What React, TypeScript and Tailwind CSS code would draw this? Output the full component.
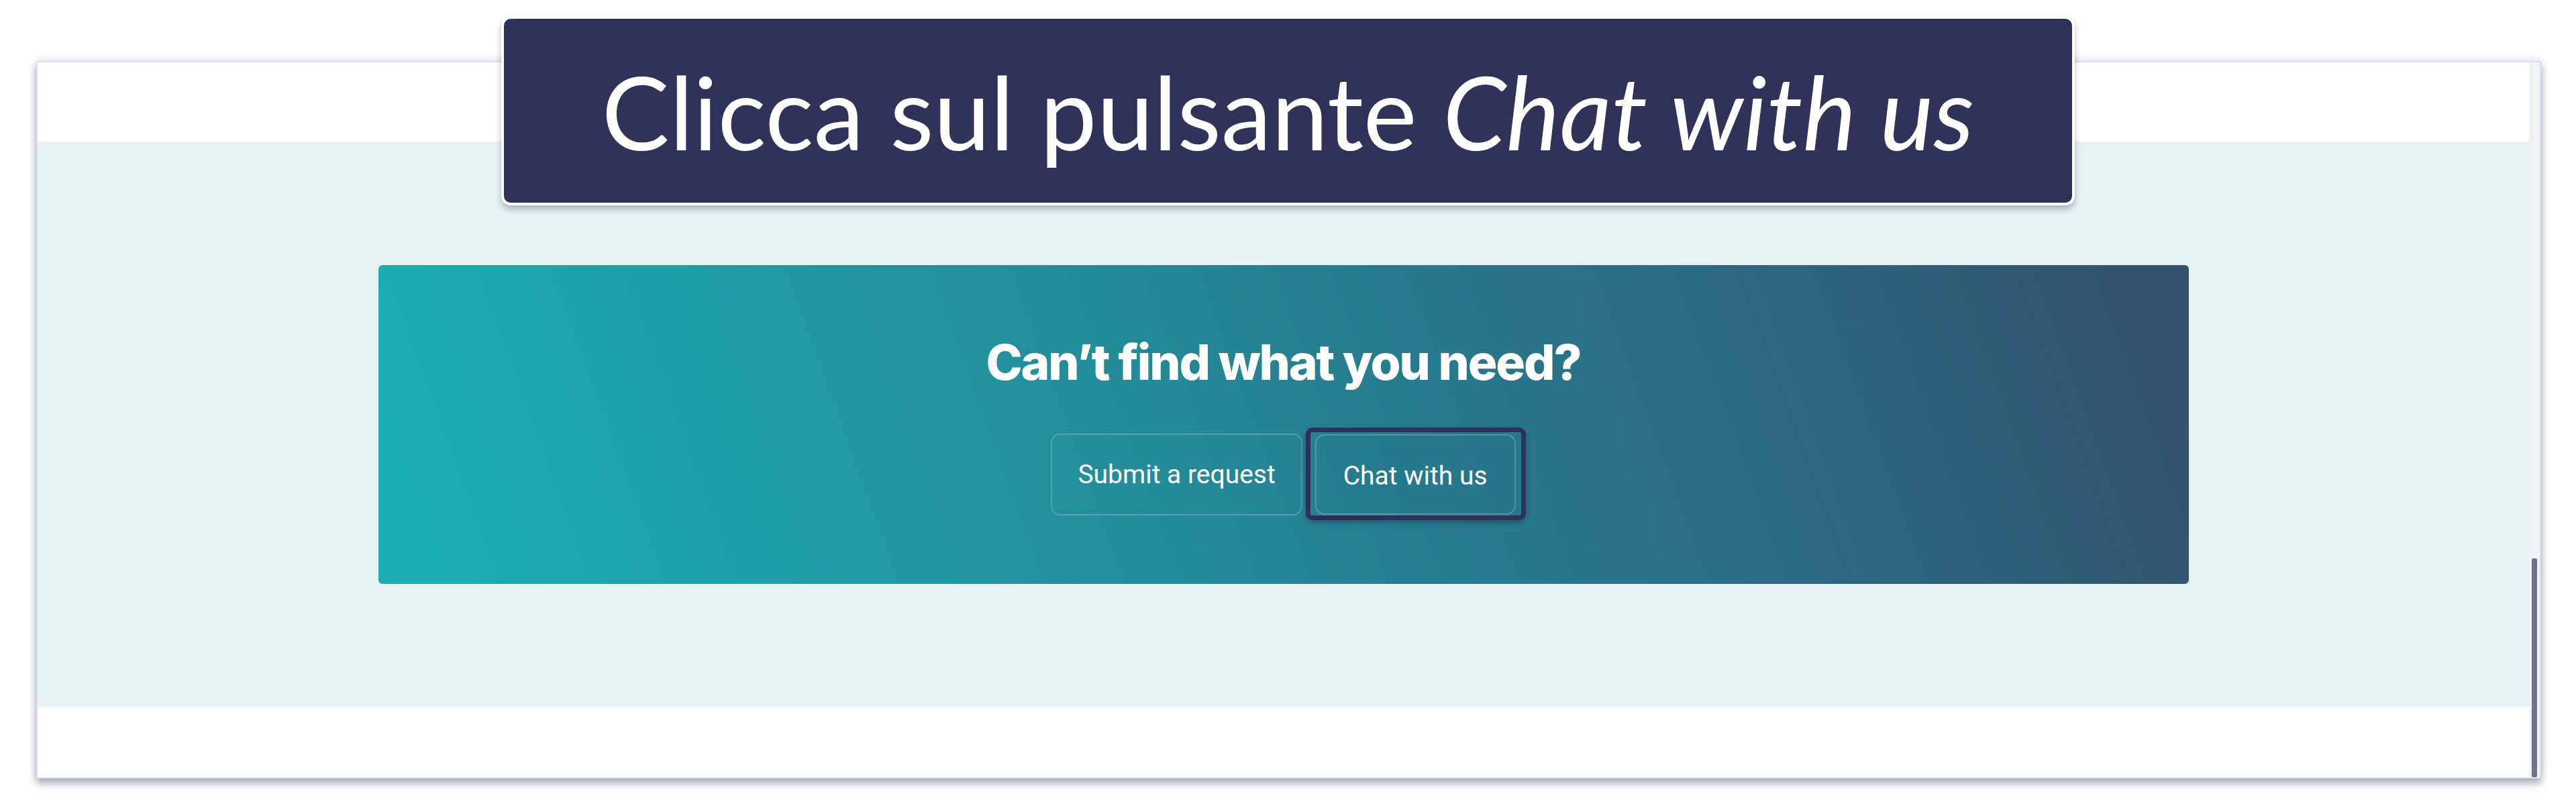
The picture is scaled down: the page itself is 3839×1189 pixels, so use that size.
import React from 'react';

/**
 * Help-centre footer screenshot: "Can't find what you need?" card
 * inside a browser-ish frame, with a callout banner on top.
 */

function HelpCard() {
  return (
    <div className="mx-auto mt-[183px] flex h-[475px] w-[2698px] flex-col items-center rounded-[6px] bg-[linear-gradient(70deg,#1cadb3_4%,#22929c_36%,#2a7087_68%,#34506f_100%)] pt-[108px]">
      <h2 className="font-['Inter',Arial,sans-serif] text-[73px] leading-none font-extrabold tracking-[-0.03em] text-white">
        Can’t find what you need?
      </h2>
      <div className="mt-[70px] flex items-center gap-[19px] font-['Roboto',Arial,sans-serif] text-[39px] text-white">
        <button className="flex h-[122px] items-center rounded-[14px] border-2 border-white/20 px-[38px]">
          Submit a request
        </button>
        <div className="relative">
          {/* highlight ring around the chat button */}
          <div className="absolute -top-[10px] -right-[15px] -bottom-[8px] -left-[14px] rounded-[10px] border-[7px] border-[#2f3158] shadow-[0_4px_10px_rgba(20,25,60,0.35)]" />
          <button className="relative flex h-[120px] items-center rounded-[14px] border-2 border-white/20 bg-[#2a6f85]/20 px-[40px] pt-[4px]">
            Chat with us
          </button>
        </div>
      </div>
    </div>
  );
}

function Frame() {
  return (
    <div className="flex h-[1069px] w-[3733px] border-2 border-[#dde1e7] bg-white shadow-[0_8px_10px_rgba(95,105,135,0.45),0_0_12px_rgba(160,168,190,0.45)]">
      <div className="flex flex-1 flex-col">
        <div className="h-[118px] bg-white" />
        <div className="h-[842px] bg-[#e7f2f4] pt-px">
          <HelpCard />
        </div>
        <div className="flex-1 bg-white" />
      </div>
      <div className="flex w-[16px] flex-col bg-[#f1f2f4] px-[4px]">
        <div className="flex-1" />
        <div className="h-[326px] rounded-[2px] bg-[#6e7385]" />
      </div>
    </div>
  );
}

export default function App() {
  return (
    <div className="relative h-[1189px] w-[3839px] overflow-hidden bg-white pt-[91px] pl-[54px]">
      <Frame />
      <div className="absolute top-[24px] left-[747px] flex h-[282px] w-[2345px] items-center justify-center rounded-[14px] border-[4px] border-white bg-[#30325a] shadow-[0_6px_10px_rgba(60,70,100,0.35)]">
        <p className="font-['Lato',sans-serif] text-[151px] leading-none text-white">
          Clicca sul pulsante <em>Chat with us</em>
        </p>
      </div>
    </div>
  );
}
